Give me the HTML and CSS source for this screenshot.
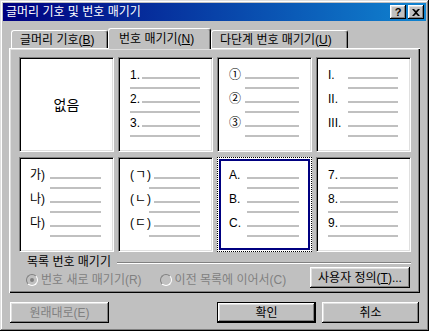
FILE: index.html
```html
<!DOCTYPE html>
<html lang="ko">
<head>
  <meta charset="UTF-8" />
  <title>글머리 기호 및 번호 매기기</title>
  <link rel="stylesheet" href="styles.css">
</head>
<body>

  <div class="window">
    <div class="titlebar">
      <span class="title">글머리 기호 및 번호 매기기</span>
      <div class="title-buttons">
        <span class="tbtn help">?</span>
        <span class="tbtn close">
          <svg width="8" height="7" viewBox="0 0 8 7"><path d="M0 0h2l2 2 2-2h2L5 3.5 8 7H6L4 5 2 7H0l3-3.5z" fill="#000"/></svg>
        </span>
      </div>
    </div>

    <div class="content">
      <div class="tabs">
        <div class="tab t1">글머리 기호(<u>B</u>)</div>
        <div class="tab t2 active">번호 매기기(<u>N</u>)</div>
        <div class="tab t3">다단계 번호 매기기(<u>U</u>)</div>
      </div>

      <div class="panel">
        <div class="gallery">
          <div class="cell none">없음</div>

          <div class="cell c-num">
            <div class="item"><div class="row"><span class="lbl">1.</span><span class="rule"></span></div><div class="sub"></div></div>
            <div class="item"><div class="row"><span class="lbl">2.</span><span class="rule"></span></div><div class="sub"></div></div>
            <div class="item"><div class="row"><span class="lbl">3.</span><span class="rule"></span></div><div class="sub"></div></div>
          </div>

          <div class="cell c-circ">
            <div class="item"><div class="row"><span class="lbl">①</span><span class="rule"></span></div><div class="sub"></div></div>
            <div class="item"><div class="row"><span class="lbl">②</span><span class="rule"></span></div><div class="sub"></div></div>
            <div class="item"><div class="row"><span class="lbl">③</span><span class="rule"></span></div><div class="sub"></div></div>
          </div>

          <div class="cell c-roman">
            <div class="item"><div class="row"><span class="lbl">I.</span><span class="rule"></span></div><div class="sub"></div></div>
            <div class="item"><div class="row"><span class="lbl">II.</span><span class="rule"></span></div><div class="sub"></div></div>
            <div class="item"><div class="row"><span class="lbl">III.</span><span class="rule"></span></div><div class="sub"></div></div>
          </div>

          <div class="cell c-kor">
            <div class="item"><div class="row"><span class="lbl">가)</span><span class="rule"></span></div><div class="sub"></div></div>
            <div class="item"><div class="row"><span class="lbl">나)</span><span class="rule"></span></div><div class="sub"></div></div>
            <div class="item"><div class="row"><span class="lbl">다)</span><span class="rule"></span></div><div class="sub"></div></div>
          </div>

          <div class="cell c-jamo">
            <div class="item"><div class="row"><span class="lbl">(ㄱ)</span><span class="rule"></span></div><div class="sub"></div></div>
            <div class="item"><div class="row"><span class="lbl">(ㄴ)</span><span class="rule"></span></div><div class="sub"></div></div>
            <div class="item"><div class="row"><span class="lbl">(ㄷ)</span><span class="rule"></span></div><div class="sub"></div></div>
          </div>

          <div class="cell c-alpha selected">
            <div class="item"><div class="row"><span class="lbl">A.</span><span class="rule"></span></div><div class="sub"></div></div>
            <div class="item"><div class="row"><span class="lbl">B.</span><span class="rule"></span></div><div class="sub"></div></div>
            <div class="item"><div class="row"><span class="lbl">C.</span><span class="rule"></span></div><div class="sub"></div></div>
          </div>

          <div class="cell c-num">
            <div class="item"><div class="row"><span class="lbl">7.</span><span class="rule"></span></div><div class="sub"></div></div>
            <div class="item"><div class="row"><span class="lbl">8.</span><span class="rule"></span></div><div class="sub"></div></div>
            <div class="item"><div class="row"><span class="lbl">9.</span><span class="rule"></span></div><div class="sub"></div></div>
          </div>
        </div>

        <div class="group-label">
          <span>목록 번호 매기기</span>
          <div class="etch"></div>
        </div>

        <div class="options">
          <div class="radio checked"><span class="circle"></span><span class="dim">번호 새로 매기기(R)</span></div>
          <div class="radio second"><span class="circle"></span><span class="dim">이전 목록에 이어서(C)</span></div>
          <div class="btn custom">사용자 정의(<u>T</u>)...</div>
        </div>
      </div>

      <div class="actions">
        <div class="btn"><span class="dim">원래대로(E)</span></div>
        <div class="spacer"></div>
        <div class="btn default">확인</div>
        <div class="btn cancel">취소</div>
      </div>
    </div>
  </div>

</body>
</html>
```

FILE: styles.css
```css
/* Win98 style dialog */
body {
  margin: 0;
  font-family: "Liberation Sans", "Noto Sans CJK KR", sans-serif;
  font-size: 12px;
  line-height: 14px;
  color: #000;
}

.window {
  width: 429px;
  height: 331px;
  box-sizing: border-box;
  padding: 3px;
  background: #c0c0c0;
  box-shadow: inset -1px -1px #000, inset 1px 1px #dfdfdf,
              inset -2px -2px #808080, inset 2px 2px #fff;
}

.titlebar {
  height: 18px;
  display: flex;
  align-items: center;
  justify-content: space-between;
  padding: 0 2px 0 3px;
  background: linear-gradient(to right, #000080, #1084d0);
  color: #fff;
}

.title {
  font-size: 12px;
}

.title-buttons {
  display: flex;
  gap: 2px;
}

.tbtn {
  width: 16px;
  height: 14px;
  box-sizing: border-box;
  display: flex;
  align-items: center;
  justify-content: center;
  background: #c0c0c0;
  color: #000;
  font-weight: bold;
  font-size: 11px;
  box-shadow: inset -1px -1px #000, inset 1px 1px #fff,
              inset -2px -2px #808080, inset 2px 2px #dfdfdf;
}

.content {
  padding: 0 6px;
}

/* tabs */
.tabs {
  display: flex;
  align-items: flex-end;
  height: 20px;
  margin-top: 7px;
  padding-left: 2px;
}

.tab {
  height: 18px;
  box-sizing: border-box;
  padding: 2px 0 0 8px;
  border-top: 1px solid #fff;
  border-left: 1px solid #fff;
  border-right: 1px solid #000;
  border-radius: 3px 3px 0 0;
  box-shadow: inset -1px 0 #808080;
  white-space: nowrap;
}

.tab.t1 { width: 97px; }
.tab.t2 { width: 103px; padding-left: 10px; }
.tab.t3 { width: 137px; padding-left: 8px; }

.tab.active {
  height: 21px;
  margin-bottom: -1px;
  padding-top: 3px;
  background: #c0c0c0;
  position: relative;
  z-index: 1;
}

/* panel */
.panel {
  padding: 9px 9px 5px 10px;
  box-shadow: inset 1px 1px #fff, inset -1px -1px #000,
              inset -2px -2px #808080, inset 2px 2px #dfdfdf;
}

.gallery {
  display: grid;
  grid-template-columns: repeat(4, 95px);
  grid-template-rows: 95px 95px;
  column-gap: 4px;
  row-gap: 5px;
}

.cell {
  background: #fff;
  box-sizing: border-box;
  border: 1px solid;
  border-color: #808080 #fff #fff #808080;
  box-shadow: inset 1px 1px #000, inset -1px -1px #dfdfdf;
  padding: 9px 12px 0 11px;
}

.cell.none {
  display: flex;
  align-items: center;
  justify-content: center;
  padding: 0;
  font-size: 14px;
}

.cell.selected {
  border: 1px dotted #000;
  box-shadow: inset 0 0 0 1px #fff, inset 0 0 0 3px #000080;
}

.item {
  height: 24px;
}

.row {
  display: flex;
  align-items: flex-end;
  height: 16px;
  line-height: 16px;
}

.lbl {
  flex-shrink: 0;
  white-space: nowrap;
}

.rule {
  flex: 1;
  height: 2px;
  margin-bottom: 4px;
  background: #c0c0c0;
}

.sub {
  height: 2px;
  margin-top: 4px;
  background: #c0c0c0;
}

.c-num .lbl { width: 12px; }
.c-circ .lbl { width: 16px; }
.c-circ .sub { margin-left: 16px; }
.c-roman .lbl { width: 20px; }
.c-roman .sub { margin-left: 20px; }
.c-kor { padding-left: 10px; }
.c-kor .lbl { width: 20px; }
.c-kor .sub { margin-left: 20px; }
.c-jamo .lbl { width: 24px; letter-spacing: 1px; }
.c-jamo .sub { margin-left: 19px; }
.c-alpha .lbl { width: 18px; }
.c-alpha .sub { margin-left: 18px; }

/* group */
.group-label {
  display: flex;
  align-items: center;
  margin-top: 3px;
  padding-left: 8px;
  height: 14px;
}

.etch {
  flex: 1;
  height: 0;
  margin: 1px 0 0 6px;
  border-top: 1px solid #808080;
  border-bottom: 1px solid #fff;
}

.options {
  display: flex;
  align-items: center;
  height: 21px;
  margin-top: -2px;
  padding-left: 7px;
}

.radio {
  display: flex;
  align-items: center;
  gap: 3px;
  margin-top: 5px;
}

.radio.second {
  margin-left: 18px;
}

.circle {
  width: 12px;
  height: 12px;
  box-sizing: border-box;
  border-radius: 50%;
  border: 1px solid;
  border-color: #808080 #fff #fff #808080;
  background: #c0c0c0;
  display: flex;
  align-items: center;
  justify-content: center;
}

.radio.checked .circle::after {
  content: "";
  width: 4px;
  height: 4px;
  border-radius: 50%;
  background: #808080;
}

.dim {
  color: #808080;
}

/* buttons */
.btn {
  box-sizing: border-box;
  height: 21px;
  display: flex;
  align-items: center;
  justify-content: center;
  background: #c0c0c0;
  box-shadow: inset -1px -1px #000, inset 1px 1px #fff,
              inset -2px -2px #808080, inset 2px 2px #dfdfdf;
  white-space: nowrap;
}

.btn.custom {
  width: 100px;
  margin-left: auto;
  margin-right: 1px;
}

.actions {
  display: flex;
  margin-top: 9px;
  padding-left: 1px;
  padding-right: 1px;
}

.actions .btn {
  width: 99px;
}

.spacer {
  flex: 1;
}

.btn.default {
  width: 99px;
  border: 1px solid #000;
}

.btn.cancel {
  width: 97px;
  margin-left: 6px;
}
```
